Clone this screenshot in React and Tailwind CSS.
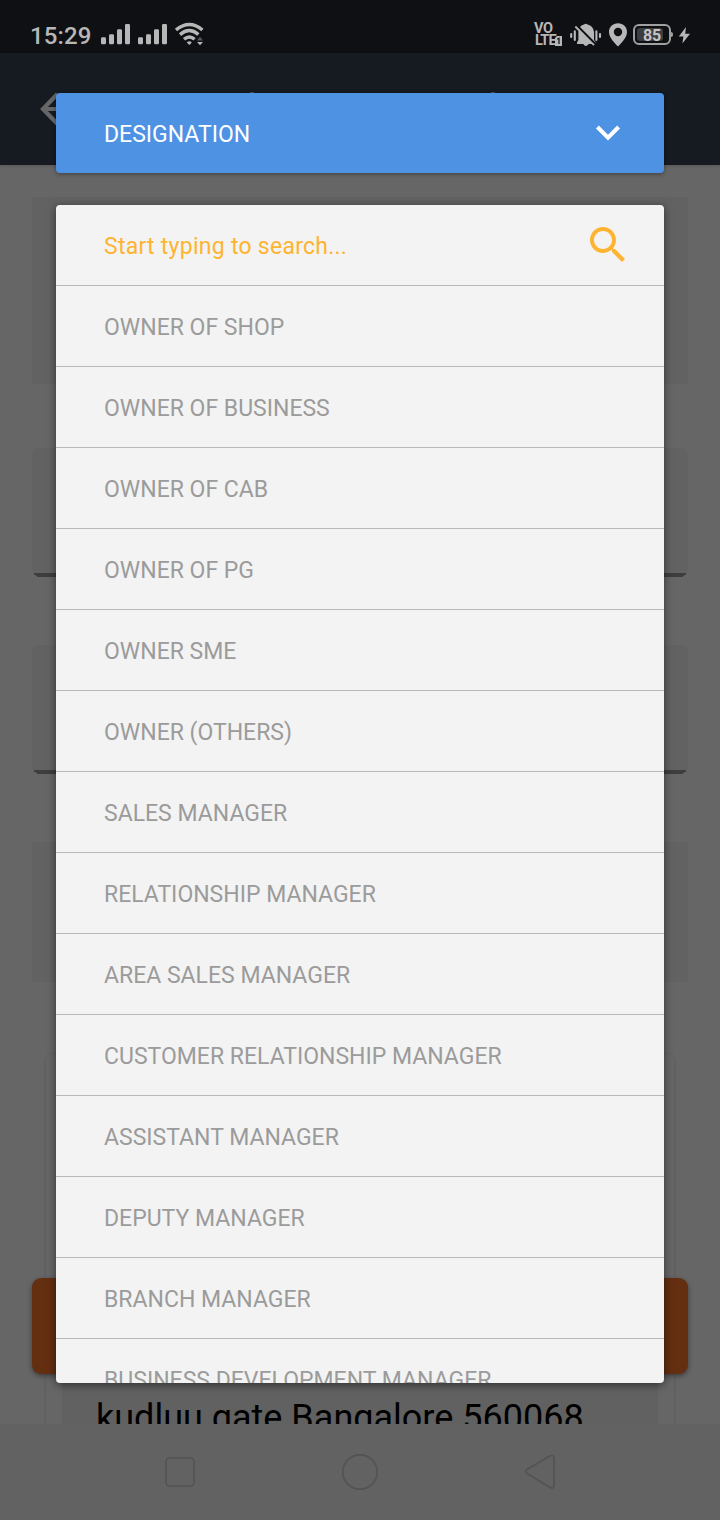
const options = [
  'OWNER OF SHOP',
  'OWNER OF BUSINESS',
  'OWNER OF CAB',
  'OWNER OF PG',
  'OWNER SME',
  'OWNER (OTHERS)',
  'SALES MANAGER',
  'RELATIONSHIP MANAGER',
  'AREA SALES MANAGER',
  'CUSTOMER RELATIONSHIP MANAGER',
  'ASSISTANT MANAGER',
  'DEPUTY MANAGER',
  'BRANCH MANAGER',
  'BUSINESS DEVELOPMENT MANAGER',
];

function Signal() {
  return (
    <svg width="30" height="21" viewBox="0 0 30 21" fill="#b7b7b8">
      <rect x="0" y="13.2" width="5" height="7" rx="1.3" />
      <rect x="8" y="10.2" width="5" height="10" rx="1.3" />
      <rect x="16" y="5.2" width="5" height="15" rx="1.3" />
      <rect x="24" y="0" width="5" height="20.2" rx="1.3" />
    </svg>
  );
}

function Wifi() {
  return (
    <svg width="30" height="24" viewBox="0 0 30 24" fill="none" stroke="#b7b7b8" strokeWidth="3.4">
      <path d="M1 8 Q14.5 -3 27.4 8" />
      <path d="M5 12.6 Q14.4 4.6 23.4 12.6" />
      <path d="M9 17.2 Q14.4 12.6 19.6 17.2" />
      <path d="M11.8 20.4 Q14.3 18 16.8 20.4 L14.3 23Z" fill="#b7b7b8" stroke="none" />
      <path d="M22 18.4 L25 14.8 L28 18.4Z" fill="#55565a" stroke="none" />
      <path d="M22 20 H28 L25 23.2Z" fill="#b7b7b8" stroke="none" />
    </svg>
  );
}

function StatusBar() {
  return (
    <div className="flex h-[53px] shrink-0 items-start bg-[#0f1013] text-[#b7b7b8]">
      <div className="ml-[30px] mt-[22px] w-[70px] text-[24px] leading-[29px] font-medium tracking-[0.1px]">15:29</div>
      <div className="ml-px mt-6 flex gap-[7px]">
        <Signal />
        <Signal />
      </div>
      <div className="ml-[7px] mt-[22px]"><Wifi /></div>
      <div className="ml-auto flex pr-[29px]">
        <div className="mt-[23px] flex h-6 w-[29px] flex-col text-[14.5px] leading-[12px] font-bold">
          <div className="h-3 tracking-[-0.5px]">VO</div>
          <div className="flex h-3 pl-px">
            <span className="w-5 shrink-0 tracking-[-0.9px]">LTE</span>
            <svg className="mt-px shrink-0" width="7" height="10" viewBox="0 0 7 10">
              <path d="M2 0H7V10H0V2Z" fill="#b7b7b8" />
              <path d="M2.2 3.2 L4 2.3 V8" fill="none" stroke="#0f1013" strokeWidth="1.2" />
            </svg>
          </div>
        </div>
        <svg className="ml-[7px] mt-[22px]" width="32" height="26" viewBox="0 0 32 26" fill="#b7b7b8">
          <path d="M7 22 V20.4 L8.4 18 V10 Q9.3 3.4 14 2.6 Q15.8 0.8 17.6 2.6 Q23.2 3.8 24 10 V18 L25.8 20.4 V22 H18.6 Q15.9 26 13.2 22Z" />
          <path d="M6.4 3.2 L26 22.8" stroke="#0f1013" strokeWidth="2.4" />
          <path d="M5.3 4.5 L24 23.2" stroke="#b7b7b8" strokeWidth="1.8" />
          <path d="M1.2 12V15 M4.8 9.4V18 M26.4 9.4V18 M30 12V15" stroke="#b7b7b8" strokeWidth="2.1" strokeLinecap="round" />
        </svg>
        <svg className="ml-[6px] mt-[23px]" width="20" height="24" viewBox="0 0 20 24">
          <path d="M10 0.3 C4.8 0.3 1 4.2 1 9 C1 14.5 6 19 10 23.6 C14 19 19 14.5 19 9 C19 4.2 15.2 0.3 10 0.3Z M10 4.8 A4.2 4.2 0 1 1 10 13.2 A4.2 4.2 0 0 1 10 4.8Z" fill="#b7b7b8" fillRule="evenodd" />
        </svg>
        <div className="ml-[5px] mt-[24px] flex h-[21px] items-center">
          <div className="flex h-[21px] w-[38px] items-center rounded-[6px] border-2 border-[#a0a0a1] p-[2px]">
            <div className="h-[13px] w-[26px] rounded-[3px] bg-[#3c3d40]">
              <div className="w-[30px] pt-px text-center text-[16px] leading-[14px] font-bold tracking-[-0.2px] text-[#c4c4c5]">85</div>
            </div>
          </div>
          <div className="h-[5px] w-[2px] rounded-r-sm bg-[#a0a0a1]" />
        </div>
        <svg className="ml-[5px] mt-[27px]" width="13" height="17" viewBox="0 0 13 17">
          <path d="M8 0 L0.8 9.4 H5.4 L4.4 16.5 L12 6.8 H7.2Z" fill="#b7b7b8" />
        </svg>
      </div>
    </div>
  );
}

function Field() {
  return (
    <div className="mt-16 flex h-[129px] shrink-0 flex-col rounded-lg bg-[#626262]">
      <svg className="mx-0.5 mt-auto h-1 w-[652px]" viewBox="0 0 652 4" fill="#3e3e3e">
        <path d="M0 0H652V2H650V3H649V4H3V3H2V2H0Z" />
      </svg>
    </div>
  );
}

function Backdrop() {
  return (
    <div className="flex h-full flex-col overflow-hidden bg-[#666666]">
      <StatusBar />
      <div className="relative z-10 flex h-[112px] shrink-0 items-center bg-[#161a21] pl-[39px] shadow-[0_1px_3px_rgba(0,0,0,0.15)]">
        <svg width="34" height="34" viewBox="0 0 34 34" fill="none" stroke="#666666" strokeWidth="4.2">
          <path d="M18.5 2 L4 17 L18.5 32 M4 17H34" />
        </svg>
        <span className="absolute left-[250px] top-[39px] h-px w-[4px] bg-[#4b4d51]" />
        <span className="absolute left-[491px] top-[39px] h-px w-[4px] bg-[#4b4d51]" />
      </div>
      <div className="flex min-h-0 flex-1 flex-col overflow-hidden px-8 pt-8">
        <div className="h-[187px] shrink-0 bg-[#626262]" />
        <Field />
        <div className="h-1 shrink-0" />
        <Field />
        <div className="mt-[68px] h-[140px] shrink-0 bg-[#626262]" />
        <div className="mx-[14px] mt-[72px] flex h-[460px] shrink-0 flex-col rounded-md bg-[#666666] px-4 pt-4 shadow-[0_1px_3px_rgba(0,0,0,0.2)]">
          <div className="flex-1 bg-[#616161] px-[34px] pt-[326px] text-[36px] leading-[44px] whitespace-nowrap text-black">
            kudluu gate Bangalore 560068
          </div>
        </div>
      </div>
      <div className="z-10 flex h-24 shrink-0 items-center justify-between bg-[#626262] px-[162px]">
        <svg width="36" height="36" viewBox="0 0 36 36" fill="none" stroke="#535353" strokeWidth="1.7">
          <rect x="4" y="4" width="28" height="28" rx="3.5" />
        </svg>
        <svg width="38" height="38" viewBox="0 0 38 38" fill="none" stroke="#535353" strokeWidth="1.7">
          <circle cx="19" cy="19" r="17.2" />
        </svg>
        <svg width="36" height="36" viewBox="0 0 36 36" fill="none" stroke="#535353" strokeWidth="1.7" strokeLinejoin="round">
          <path d="M4.8 15.6 Q2.6 17.4 4.8 19.2 L28.2 33.4 Q31.9 35 32 31.4 V4 Q31.9 0.6 28.4 1.8Z" />
        </svg>
      </div>
    </div>
  );
}

export default function App() {
  return (
    <div className="relative h-[1520px] w-[720px] overflow-hidden font-[Roboto,sans-serif]">
      <Backdrop />
      <div className="absolute left-8 top-[1278px] h-24 w-[656px] rounded-[9px] bg-[#642e11] shadow-[0_2px_5px_rgba(0,0,0,0.4)]" />
      <div className="absolute inset-x-14 top-[93px] z-20 flex flex-col gap-8">
        <div className="flex h-20 items-center justify-between rounded bg-[#4e92e3] pl-12 pr-10 text-[23px] text-white shadow-[0_1px_4px_rgba(0,0,0,0.4)]">
          <span className="pt-1">DESIGNATION</span>
          <svg width="32" height="32" viewBox="0 0 32 32" fill="none" stroke="#ffffff" strokeWidth="4">
            <path d="M5.4 10 L16 20.6 L26.6 10" />
          </svg>
        </div>
        <div className="h-[1178px] overflow-hidden rounded bg-[#f3f3f3] text-[23px] text-[#9b9b9b] shadow-[0_2px_8px_rgba(0,0,0,0.5)]">
          <div className="flex h-[81px] items-center justify-between border-b border-[#b8b8b8] pl-12 pr-8 text-[#ffb431]">
            <span className="pt-1 tracking-[0.26px]">Start typing to search...</span>
            <svg width="48" height="48" viewBox="0 0 24 24" fill="#ffb431">
              <path d="M15.5 14h-.79l-.28-.27C15.41 12.59 16 11.11 16 9.5 16 5.91 13.09 3 9.5 3S3 5.91 3 9.5 5.91 16 9.5 16c1.61 0 3.09-.59 4.23-1.57l.27.28v.79l5 4.99L20.49 19l-4.99-5zm-6 0C7.01 14 5 11.99 5 9.5S7.01 5 9.5 5 14 7.01 14 9.5 11.99 14 9.5 14z" />
            </svg>
          </div>
          {options.map((option) => (
            <div key={option} className="flex h-[81px] items-center border-b border-[#b8b8b8] pl-12 pt-1">{option}</div>
          ))}
        </div>
      </div>
    </div>
  );
}
